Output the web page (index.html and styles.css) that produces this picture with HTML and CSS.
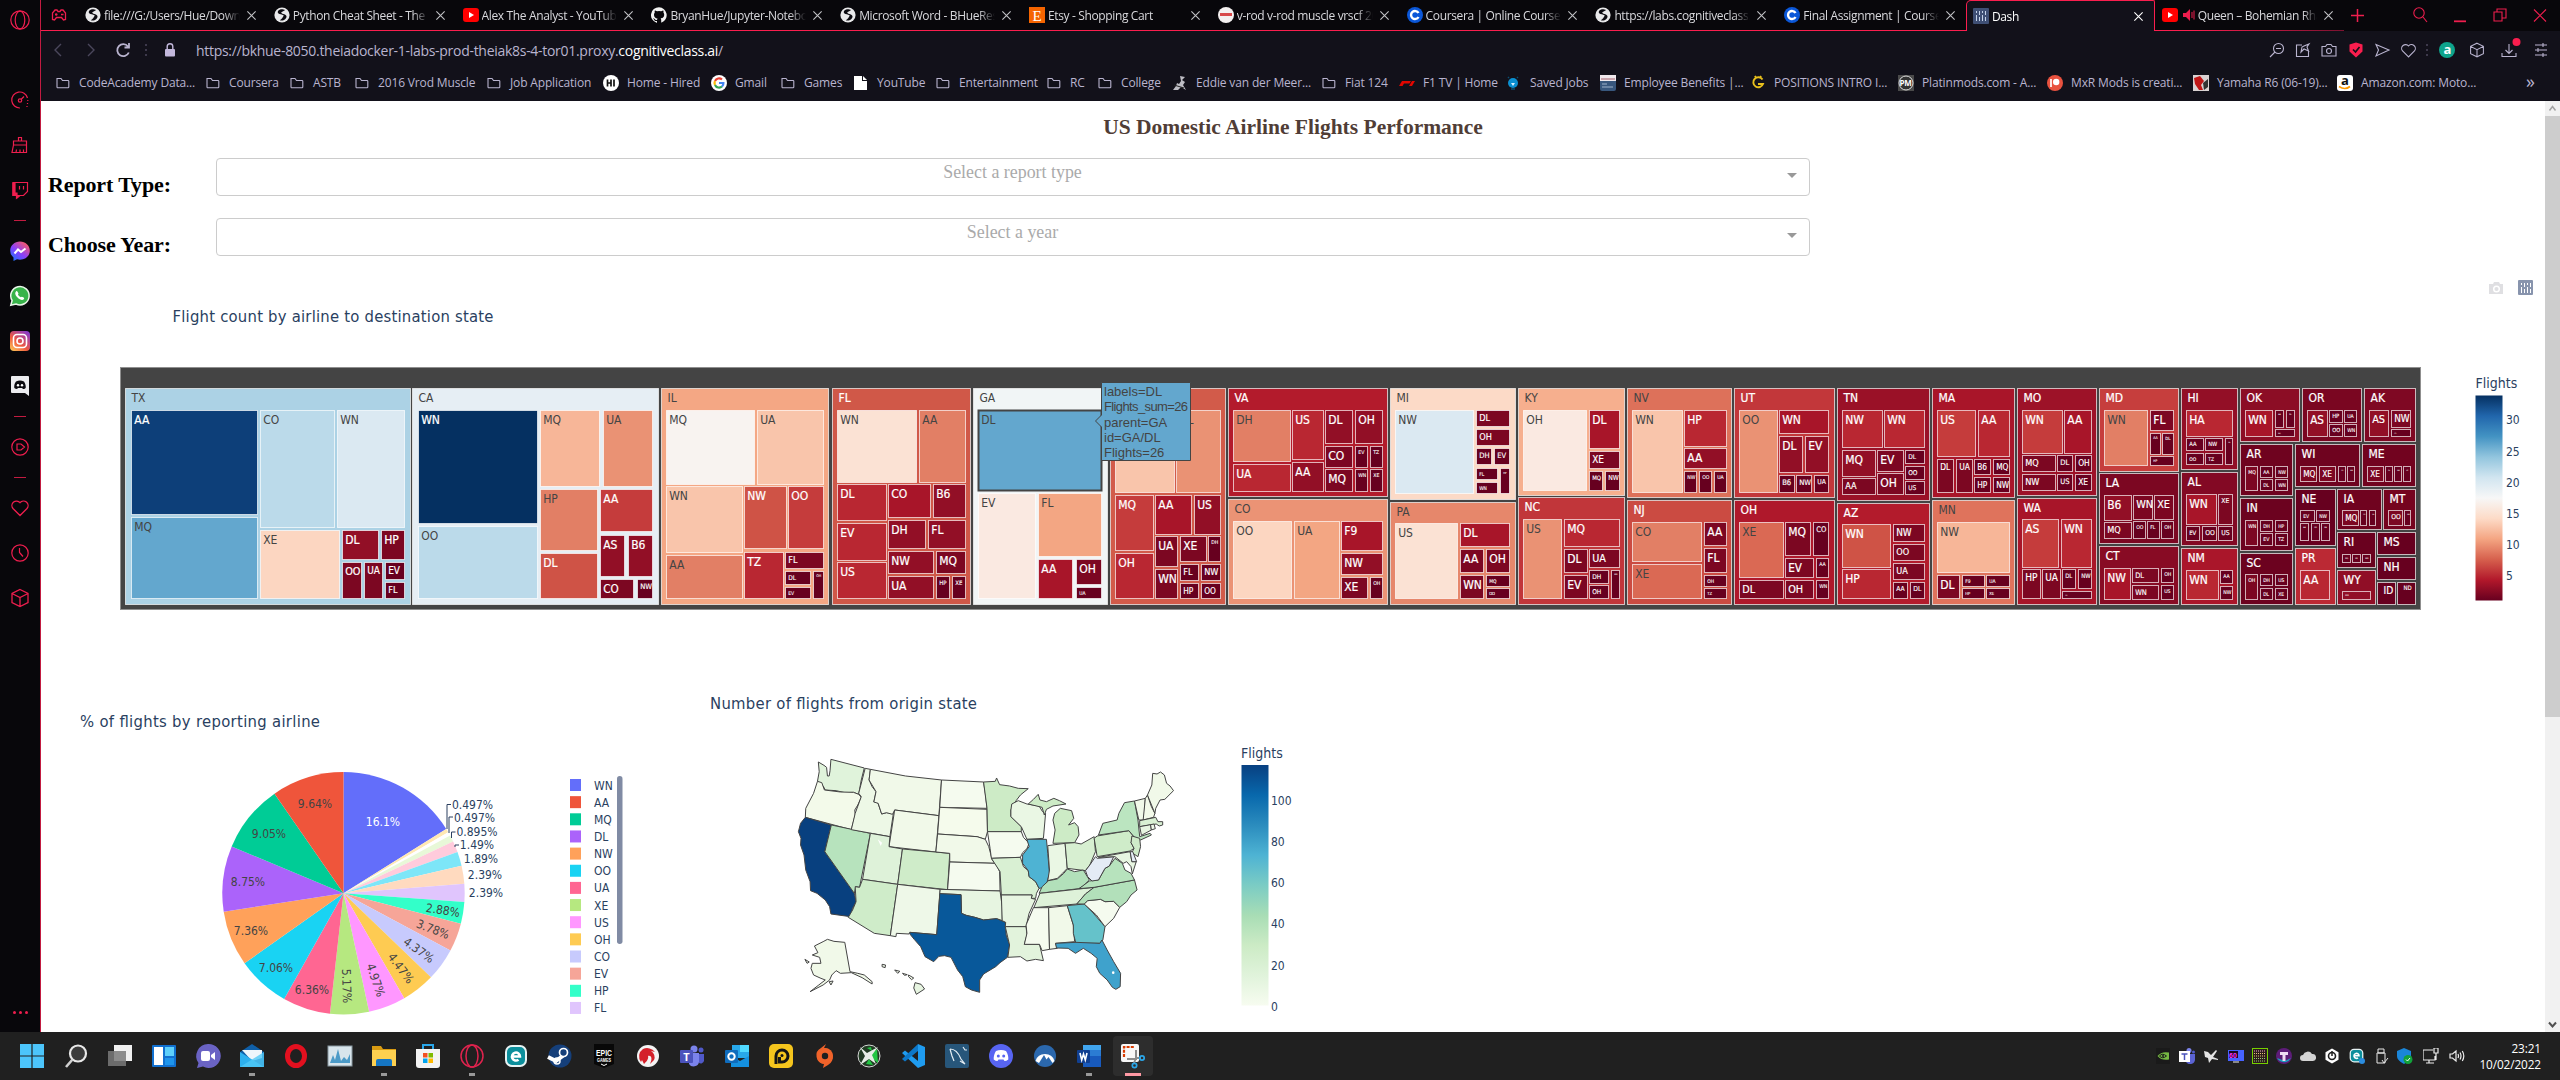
FILE: index.html
```html
<!DOCTYPE html>
<html lang="en">
<head>
<meta charset="utf-8">
<title>Dash</title>
<link rel="stylesheet" href="styles.css">
</head>
<body>
<svg class="defs" width="0" height="0">
  <symbol id="globe" viewBox="0 0 16 16"><circle cx="8" cy="8" r="7.6" fill="#e8e8ea"/><path d="M8.5 2.2C4.500 2 3 4.500 4.200 6.300 5.500 7.700 8 7 9.800 8.500 8.500 10.500 8 12.200 5.800 13.200 9 14.500 12.800 12 12.500 9.300 12 7 8.500 7.300 7.200 5.700 7.300 4.300 9.800 4.500 11.200 3z" fill="#0b0a10"/></symbol>
  <symbol id="yt" viewBox="0 0 16 16"><rect y="1" width="16" height="14" rx="3" fill="#f00"/><path d="M6 5v6l5-3z" fill="#fff"/></symbol>
  <symbol id="gh" viewBox="0 0 16 16"><path fill="#f2f2f2" d="M8 .2a8 8 0 0 0-2.500 15.600c.4 0 .5-.2.5-.4v-1.500c-2.200.5-2.700-1-2.700-1-.4-.9-.9-1.200-.9-1.200-.7-.5.1-.5.1-.5.800.1 1.200.8 1.200.8.7 1.300 1.900.9 2.400.7.1-.5.300-.9.5-1.100-1.800-.2-3.600-.9-3.600-4 0-.9.3-1.600.8-2.100-.1-.2-.4-1 .1-2.100 0 0 .7-.2 2.200.8a7.500 7.500 0 0 1 4 0c1.500-1 2.200-.8 2.200-.8.400 1.100.2 1.900.1 2.100.5.600.8 1.300.8 2.100 0 3.100-1.900 3.700-3.600 3.900.300.300.6.800.6 1.500v2.200c0 .2.100.5.5.4A8 8 0 0 0 8 .2z"/></symbol>
  <symbol id="etsy" viewBox="0 0 16 16"><rect width="16" height="16" fill="#f56400"/><text x="3.600" y="13.500" font-family="Liberation Serif" font-size="15" fill="#fff">E</text></symbol>
  <symbol id="vrod" viewBox="0 0 16 16"><circle cx="8" cy="8" r="8" fill="#f4f0f0"/><rect x="2" y="6" width="12" height="3" fill="#d8494a"/></symbol>
  <symbol id="coursera" viewBox="0 0 16 16"><circle cx="8" cy="8" r="8" fill="#0b57d8"/><path d="M11.500 6A4 4 0 1 0 11.500 10" fill="none" stroke="#fff" stroke-width="2.400"/></symbol>
  <symbol id="plotly" viewBox="0 0 16 16"><rect width="16" height="16" rx="1" fill="#3f4f75"/><path d="M3.500 7v6M6.500 9v4M9.500 7v6M12.500 9v4M3.500 3v2M6.500 3v4M9.500 3v2M12.500 3v4" stroke="#c5d3ea" stroke-width="1"/></symbol>
  <symbol id="x" viewBox="0 0 12 12"><path d="M1.500 1.500l9 9M10.500 1.500l-9 9" stroke="currentColor" stroke-width="1.200"/></symbol>
  <symbol id="folder" viewBox="0 0 14 14"><path d="M1 2.500h4l1.500 2H12a.8.8 0 0 1 .8.800V11a.8.8 0 0 1-.8.800H1.800A.8.8 0 0 1 1 11z" fill="none" stroke="#b9b4cf" stroke-width="1.100"/></symbol>
  <symbol id="cube" viewBox="0 0 20 20"><path d="M10 1.500l8 4v9l-8 4-8-4v-9zM2 5.500l8 4 8-4M10 9.500v9" fill="none" stroke="currentColor" stroke-width="1.300"/></symbol>
  <symbol id="heart" viewBox="0 0 20 20"><path d="M10 17.500L3 10.500A4.500 4.500 0 0 1 10 4.700a4.500 4.500 0 0 1 7 5.800z" fill="none" stroke="currentColor" stroke-width="1.300"/></symbol>
  <symbol id="teams" viewBox="0 0 24 24"><circle cx="14" cy="5" r="3.500" fill="#7b83eb"/><circle cx="21" cy="6" r="2.500" fill="#5059c9"/><path d="M9 9h10v9a5.500 5.500 0 0 1-10 2z" fill="#7b83eb"/><path d="M19 10h5v7a3.500 3.500 0 0 1-5 2z" fill="#5059c9"/><rect y="6" width="13" height="13" rx="1" fill="#4b53bc"/><text x="3.200" y="16.500" font-family="Open Sans" font-weight="700" font-size="11" fill="#fff">T</text></symbol>
  <symbol id="teams-light" viewBox="0 0 16 16"><circle cx="10" cy="2.500" r="2.500" fill="#7b83eb"/><circle cx="14.500" cy="4" r="1.500" fill="#5059c9"/><path d="M7 6h9v6a5 5 0 0 1-9 2z" fill="#5b63d3"/><rect y="3" width="11" height="11" fill="#fff"/><path d="M2.500 6h6M5.500 6v6" stroke="#4b53bc" stroke-width="1.500"/></symbol>
  <symbol id="eset" viewBox="0 0 24 24"><rect x="1" y="1" width="22" height="22" rx="7" fill="#e8f3f4"/><rect x="3" y="3" width="18" height="18" rx="5" fill="#0c8f9c"/><path d="M8 12.500h8a4 4 0 1 0-1.500 3.200" fill="none" stroke="#fff" stroke-width="2.500"/></symbol>
</svg>

<div class="screen">
  <aside class="sidebar">
    <div class="side-top"><svg width="20" height="20" viewBox="0 0 20 20"><circle cx="10" cy="10" r="9.200"/><ellipse cx="10" cy="10" rx="4.800" ry="8.800"/></svg></div>
    <div class="side-cell"><svg width="18" height="18" viewBox="0 0 18 18"><path d="M9 17A8 8 0 1 1 16.500 7M16.800 9v1M16.500 12v1M16 15v1"/><circle cx="9" cy="9.500" r="1.700"/><path d="M10 8.500l3-3"/></svg></div>
    <div class="side-cell"><svg width="18" height="18" viewBox="0 0 18 18"><path d="M7.500 5V1.500h3V5M2.500 5h13v4h-13zM2.500 9L1 16.500h14.500V9M5 16.500l.5-3M9 16.500v-3M12.500 16.500v-3"/></svg></div>
    <div class="side-cell"><svg width="18" height="18" viewBox="0 0 18 18"><path d="M2 1.500h14.500v9l-4 4H9l-3 2.500v-2.500H2z"/><path d="M2 2v12.500h3.500V17L8 14.500H6V12H4V2z" fill="#ee1e4e"/><path d="M8.500 5v3.500M12.500 5v3.500"/></svg></div>
    <div class="side-line"></div>
    <div class="side-cell"><svg width="20" height="20" viewBox="0 0 20 20"><defs><linearGradient id="msg" x1="0" y1="1" x2=".8" y2="0"><stop offset="0" stop-color="#0a7cff"/><stop offset=".5" stop-color="#8a3ffc"/><stop offset="1" stop-color="#ff5a5f"/></linearGradient></defs><path d="M10 .5c5.500 0 9.800 4 9.800 9.200s-4.300 9-9.800 9l-3-.4L3.500 20v-3.500A9 9 0 0 1 .2 9.700C.2 4.500 4.500.5 10 .5z" fill="url(#msg)" stroke="none"/><path d="M4.500 12.500L8 8.500l3 2.500 4.500-3.500" stroke="#fff" stroke-width="2"/></svg></div>
    <div class="side-cell"><svg width="20" height="20" viewBox="0 0 20 20"><path d="M.8 19.300l1.300-4.800A9.200 9.200 0 1 1 6 18z" fill="#37b34a" stroke="#e9f6e9" stroke-width="1.500"/><path d="M6 5.500c1-1 1.500 0 2.500 2-.8 1.200-.5 1.200.5 2.500 1.300 1.200 1.800 1.500 2.800.8 2 .8 3 1.300 2 2.500-1.500 1.500-4 .5-6-1.500s-3.500-4.500-1.800-6.300z" fill="#fff" stroke="none"/></svg></div>
    <div class="side-cell"><svg width="20" height="20" viewBox="0 0 20 20"><defs><linearGradient id="ig" x1="0" y1="1" x2=".8" y2="0"><stop offset="0" stop-color="#ffd35a"/><stop offset=".45" stop-color="#f0593f"/><stop offset="1" stop-color="#8a3ac8"/></linearGradient></defs><rect width="20" height="20" rx="4" fill="url(#ig)" stroke="none"/><rect x="3.500" y="3.500" width="13" height="13" rx="3.500" stroke="#fff" stroke-width="1.600"/><circle cx="10" cy="10" r="3" stroke="#fff" stroke-width="1.600"/></svg></div>
    <div class="side-cell"><svg width="18" height="20" viewBox="0 0 18 20"><path d="M1 0h16a1 1 0 0 1 1 1v19l-4-3H1a1 1 0 0 1-1-1V1a1 1 0 0 1 1-1z" fill="#ececf0" stroke="none"/><path d="M5 5.500c3-1.500 5-1.500 8 0 1.500 2.500 2 4.500 1.700 6.500-1 1-2 1-2.700 1l-1-1H7l-1 1c-1 0-2-.3-2.700-1C3 9.500 3.500 7.500 5 5.500z" fill="#0b0a10" stroke="none"/><circle cx="7" cy="9.300" r="1.200" fill="#fff" stroke="none"/><circle cx="11" cy="9.300" r="1.200" fill="#fff" stroke="none"/></svg></div>
    <div class="side-line"></div>
    <div class="side-cell"><svg width="18" height="18" viewBox="0 0 18 18"><circle cx="9" cy="9" r="8.200"/><path d="M6 6v6l4 0 3.500-3L10 6z"/></svg></div>
    <div class="side-line"></div>
    <div class="side-cell"><svg width="20" height="20"><use href="#heart"/></svg></div>
    <div class="side-cell"><svg width="18" height="18" viewBox="0 0 18 18"><circle cx="9" cy="9" r="8.200"/><path d="M8.500 4v4.500l3.500 4"/></svg></div>
    <div class="side-cell"><svg width="20" height="20"><use href="#cube"/></svg></div>
    <div class="side-more"><i></i><i></i><i></i></div>
  </aside>

  <div class="browser">
    <div class="tabs">
      <div class="gx"><svg width="16" height="14" viewBox="0 0 16 14"><path d="M4 2h2l1 1.500h2L10 2h2l2.500 3v6.500l-2 .5-2-2.500h-5l-2 2.500-2-.5V5zM4 6.500h2.500M5.200 5.300v2.500M10 6.500h2.500" fill="none" stroke="#ee1e4e" stroke-width="1.300"/></svg></div>
      <div class="tab"><svg class="fav"><use href="#globe"/></svg><span>file:///G:/Users/Hue/Downloads</span><svg class="close"><use href="#x"/></svg></div>
      <div class="tab"><svg class="fav"><use href="#globe"/></svg><span>Python Cheat Sheet - The Best</span><svg class="close"><use href="#x"/></svg></div>
      <div class="tab"><svg class="fav"><use href="#yt"/></svg><span>Alex The Analyst - YouTube</span><svg class="close"><use href="#x"/></svg></div>
      <div class="tab"><svg class="fav"><use href="#gh"/></svg><span>BryanHue/Jupyter-Notebooks</span><svg class="close"><use href="#x"/></svg></div>
      <div class="tab"><svg class="fav"><use href="#globe"/></svg><span>Microsoft Word - BHueResume</span><svg class="close"><use href="#x"/></svg></div>
      <div class="tab"><svg class="fav"><use href="#etsy"/></svg><span>Etsy - Shopping Cart</span><svg class="close"><use href="#x"/></svg></div>
      <div class="tab"><svg class="fav"><use href="#vrod"/></svg><span>v-rod v-rod muscle vrscf 2016</span><svg class="close"><use href="#x"/></svg></div>
      <div class="tab"><svg class="fav"><use href="#coursera"/></svg><span>Coursera | Online Courses &amp;</span><svg class="close"><use href="#x"/></svg></div>
      <div class="tab"><svg class="fav"><use href="#globe"/></svg><span>https://labs.cognitiveclass.ai</span><svg class="close"><use href="#x"/></svg></div>
      <div class="tab"><svg class="fav"><use href="#coursera"/></svg><span>Final Assignment | Coursera</span><svg class="close"><use href="#x"/></svg></div>
      <div class="tab active"><svg class="fav"><use href="#plotly"/></svg><span>Dash</span><svg class="close"><use href="#x"/></svg></div>
      <div class="tab last"><svg class="fav"><use href="#yt"/></svg><svg class="sound" viewBox="0 0 12 14"><path d="M0 5h3l4-4v12L3 9H0z" fill="#ee1e4e"/><path d="M9 4v6M11 2.500v9" stroke="#ee1e4e"/></svg><span>Queen – Bohemian Rhapsody</span><svg class="close"><use href="#x"/></svg></div>
      <svg class="plus" viewBox="0 0 12 12"><path d="M6 0v12M0 6h12" stroke="#ee1e4e" stroke-width="1.400"/></svg>
      <div class="winbtns">
        <svg viewBox="0 0 16 16"><circle cx="7" cy="6" r="5.200"/><path d="M11 10l4 5"/></svg>
        <svg viewBox="0 0 16 16"><path d="M2 14.300h12" stroke-width="1.800"/></svg>
        <svg viewBox="0 0 16 16"><path d="M2 5h8v9H2zM5 5V2h9v9h-4"/></svg>
        <svg viewBox="0 0 16 16"><path d="M2 2.500l12 12M14 2.500l-12 12"/></svg>
      </div>
    </div>
    <div class="toolbar">
      <svg class="nav" width="94" height="18" viewBox="0 0 94 18"><path d="M10 3L4 9l6 6M37 3l6 6-6 6" fill="none" stroke="#4b475c" stroke-width="1.400"/><path d="M77 5.500a6 6 0 1 0 .8 6M78 2v4.500h-4.500" fill="none" stroke="#b9b4cf" stroke-width="1.800"/></svg>
      <div class="vdots"></div>
      <svg class="lock" width="10" height="14" viewBox="0 0 10 14"><rect y="6" width="10" height="7.500" rx="1" fill="#c3b8dc"/><path d="M2.200 6V3.500a2.800 2.800 0 0 1 5.600 0V6" fill="none" stroke="#c3b8dc" stroke-width="1.400"/></svg>
      <div class="url">https://bkhue-8050.theiadocker-1-labs-prod-theiak8s-4-tor01.proxy.<b>cognitiveclass.ai</b>/</div>
      <div class="tools">
        <svg viewBox="0 0 16 16"><circle cx="9.500" cy="6.500" r="5"/><path d="M6 10l-5 5M7 6.500h5"/></svg>
        <svg viewBox="0 0 16 16"><path d="M7 3H1.500v11.500h12V9M6 10l3-3 4.500 2L12 5l2-3-5 2-2 1z"/></svg>
        <svg viewBox="0 0 16 16"><path d="M1 4.500h3.500L6 2.500h4l1.500 2H15V14H1z"/><circle cx="8" cy="9" r="2.500"/></svg>
        <svg viewBox="0 0 16 16"><path d="M8 .5l6.500 2v7L8 15.500 1.500 9.500v-7z" fill="#fa1e4e" stroke="none"/><path d="M5 7.500l2.500 2.500L11.500 5" stroke="#12111a" stroke-width="1.700"/></svg>
        <svg viewBox="0 0 16 16"><path d="M2 2.500l13 5.500-13 6 2.500-6z"/></svg>
        <svg viewBox="0 0 16 16"><use href="#heart" width="17" height="17"/></svg>
        <div class="vdots"></div>
        <svg viewBox="0 0 16 16"><circle cx="8" cy="8" r="8" fill="#0ea48c" stroke="none"/><text class="glyph-a" x="4.500" y="12">a</text></svg>
        <svg viewBox="0 0 16 16"><use href="#cube" width="16" height="16"/></svg>
        <svg class="dl" viewBox="0 0 16 16"><path d="M8 2v9M4.500 8L8 11.500 11.500 8M1 11v3.500h14V11"/><circle cx="15.500" cy="0" r="4" fill="#fa1e4e" stroke="none"/></svg>
        <svg viewBox="0 0 16 16"><path d="M2 3h12M2 8h12M2 13h12M10 1v4M5 6v4M10 11v4" /></svg>
      </div>
    </div>
    <div class="bookmarks">
      <div><svg class="fd"><use href="#folder"/></svg>CodeAcademy Data...</div>
      <div><svg class="fd"><use href="#folder"/></svg>Coursera</div>
      <div><svg class="fd"><use href="#folder"/></svg>ASTB</div>
      <div><svg class="fd"><use href="#folder"/></svg>2016 Vrod Muscle</div>
      <div><svg class="fd"><use href="#folder"/></svg>Job Application</div>
      <div><svg class="fi" viewBox="0 0 16 16"><circle cx="8" cy="8" r="8" fill="#fff"/><path d="M4.500 4.500v7M4.500 8H8M8 4.500v7M11 4.500v7" stroke="#111" stroke-width="1.700"/></svg>Home - Hired</div>
      <div><svg class="fi" viewBox="0 0 16 16"><circle cx="8" cy="8" r="8" fill="#fff"/><g fill="none" stroke-width="2.200"><path d="M11 4.500A4.500 4.500 0 0 0 4 6" stroke="#ea4335"/><path d="M4 6a4.500 4.500 0 0 0 0 4" stroke="#fbbc05"/><path d="M4 10a4.500 4.500 0 0 0 7 1.500" stroke="#34a853"/><path d="M11 11.500A4.500 4.500 0 0 0 12.400 8H8" stroke="#4285f4"/></g></svg>Gmail</div>
      <div><svg class="fd"><use href="#folder"/></svg>Games</div>
      <div><svg class="fi" viewBox="0 0 16 16"><path d="M1 1h8v5h5v9H1zM10 1l4 4h-4z" fill="#fff"/></svg>YouTube</div>
      <div><svg class="fd"><use href="#folder"/></svg>Entertainment</div>
      <div><svg class="fd"><use href="#folder"/></svg>RC</div>
      <div><svg class="fd"><use href="#folder"/></svg>College</div>
      <div><svg class="fi" viewBox="0 0 16 16"><path d="M8 1l5 1-3 3 3 2-2 3 3 5-5-3-3 3-5 0 3-4 1-3 2 1 2-3z" fill="#bdbdc4"/><path d="M2 10l10 3" stroke="#222"/></svg>Eddie van der Meer...</div>
      <div><svg class="fd"><use href="#folder"/></svg>Fiat 124</div>
      <div><svg class="fi" viewBox="0 0 16 16"><path d="M0 11l3-5h9l-1.500 2.500H5L3.500 11zM13 6h3l-3 5h-3z" fill="#e10600"/></svg>F1 TV | Home</div>
      <div><svg class="fi" viewBox="0 0 16 16"><circle cx="7" cy="8" r="5" fill="#0a8fd0"/><path d="M5 14h4M2 2l1 1M12 2l-1 1" stroke="#0a4d70" stroke-width="1.500"/><path d="M5 8h4l-2 3z" fill="#d7f0ff"/></svg>Saved Jobs</div>
      <div><svg class="fi" viewBox="0 0 16 16"><rect width="16" height="16" rx="2" fill="#38577d"/><path d="M0 0h16v6H0z" fill="#f0e9ed"/><path d="M1 4h14" stroke="#a5606c"/><path d="M2 9h5M2 12h11" stroke="#9fb4cc"/></svg>Employee Benefits |...</div>
      <div><svg class="fi" viewBox="0 0 16 16"><path d="M12.500 4.500A5 5 0 1 0 13 9H8M5 1l1 2M11 1l-1 2" fill="none" stroke="#e8c01c" stroke-width="1.900"/></svg>POSITIONS INTRO I...</div>
      <div><svg class="fi" viewBox="0 0 16 16"><rect width="16" height="16" fill="#4a4a4a"/><circle cx="8" cy="8" r="7" fill="#333" stroke="#ddd"/><text class="pm" x="1.500" y="11">PM</text></svg>Platinmods.com - A...</div>
      <div><svg class="fi" viewBox="0 0 16 16"><circle cx="8" cy="8" r="8" fill="#e8523f"/><circle cx="9.200" cy="7" r="3.200" fill="#fff"/><path d="M4 4v8" stroke="#fff" stroke-width="1.700"/></svg>MxR Mods is creati...</div>
      <div><svg class="fi" viewBox="0 0 16 16"><rect width="16" height="16" fill="#d9d2d2"/><path d="M1 3l6-2 4 5-3 4 2 5H6L2 9z" fill="#c01616"/><path d="M10 8l5-4v8l-4 3z" fill="#333"/></svg>Yamaha R6 (06-19)...</div>
      <div><svg class="fi" viewBox="0 0 16 16"><rect width="16" height="16" rx="3" fill="#fff"/><text class="az" x="4" y="10">a</text><path d="M2 11.500q6 4 11 0" fill="none" stroke="#f90" stroke-width="1.700"/></svg>Amazon.com: Moto...</div>
      <div class="more">»</div>
    </div>

    <div class="viewport">
      <main class="page">
        <h1>US Domestic Airline Flights Performance</h1>
        <div class="field"><h2>Report Type:</h2><div class="select"><span>Select a report type</span><i></i></div></div>
        <div class="field"><h2>Choose Year:</h2><div class="select"><span>Select a year</span><i></i></div></div>
        <svg class="chart" id="tree" width="2504" height="410" viewBox="41 270 2504 410">
          <defs><linearGradient id="rdbu" x1="0" y1="1" x2="0" y2="0"><stop offset="0" stop-color="#67001f"/><stop offset=".1" stop-color="#b2182b"/><stop offset=".2" stop-color="#d6604d"/><stop offset=".3" stop-color="#f4a582"/><stop offset=".4" stop-color="#fddbc7"/><stop offset=".5" stop-color="#f7f7f7"/><stop offset=".6" stop-color="#d1e5f0"/><stop offset=".7" stop-color="#92c5de"/><stop offset=".8" stop-color="#4393c3"/><stop offset=".9" stop-color="#2166ac"/><stop offset="1" stop-color="#053061"/></linearGradient></defs>
          <text class="title" x="172.500" y="322" textLength="321">Flight count by airline to destination state</text>
          <g opacity=".9"><path d="M2489 284h4l1-2h5l1 2h3v10h-14z" fill="#dcdcdf"/><circle cx="2496.500" cy="289" r="2.800" fill="none" stroke="#fff" stroke-width="1.500"/></g>
          <g transform="translate(2518 280)"><rect width="15" height="15" rx="1" fill="#8894ad"/><path d="M3.500 7v6M6.500 9v4M9.500 7v6M12.500 9v4M3.500 3v2M6.500 3v4M9.500 3v2M12.500 3v4" stroke="#fff" stroke-width="1"/></g>
          <text class="cbt" x="2475.500" y="388">Flights</text>
          <rect x="2475.500" y="395.500" width="27" height="205" fill="url(#rdbu)"/>
          <g class="tick"><text x="2506" y="424">30</text><text x="2506" y="456">25</text><text x="2506" y="487">20</text><text x="2506" y="518">15</text><text x="2506" y="549">10</text><text x="2506" y="580">5</text></g>
          <rect x="120.500" y="367.500" width="2300" height="242" fill="#444" stroke="#8f8f8f"/>
          <g id="cells"></g>
          <g class="hover"><path d="M1095.500 421l6-6V382.500h89v78h-89V427z"/>
            <text x="1104" y="395.500">labels=DL</text><text x="1104" y="410.500" textLength="84">Flights_sum=26</text><text x="1104" y="426.500">parent=GA</text><text x="1104" y="441.500">id=GA/DL</text><text x="1104" y="456.500">Flights=26</text></g>
        </svg>
        <div class="row">
          <svg class="chart" id="pie" width="639" height="352" viewBox="41 680 639 352">
            <text class="title" x="80" y="727" textLength="240">% of flights by reporting airline</text>
            <g id="slices"></g><g id="legend"></g>
            <rect x="617" y="776" width="5.500" height="168" rx="2.700" fill="#808ba4"/>
            <path d="M447 829v-24.500h4M449 833v-16h4M451.500 838v-6h4M455 847v-2h4" fill="none" stroke="#2a3f5f"/>
          </svg>
          <svg class="chart" id="map" width="700" height="352" viewBox="680 680 700 352">
            <defs><linearGradient id="gnbu" x1="0" y1="1" x2="0" y2="0"><stop offset="0" stop-color="#f7fcf0"/><stop offset=".125" stop-color="#e0f3db"/><stop offset=".25" stop-color="#ccebc5"/><stop offset=".375" stop-color="#a8ddb5"/><stop offset=".5" stop-color="#7bccc4"/><stop offset=".625" stop-color="#4eb3d3"/><stop offset=".75" stop-color="#2b8cbe"/><stop offset=".875" stop-color="#0868ac"/><stop offset="1" stop-color="#084081"/></linearGradient></defs>
            <text class="title" x="710" y="709" textLength="267">Number of flights from origin state</text>
            <g id="states" transform="translate(680 680) scale(.43367 .33333)"></g>
            <text class="cbt" x="1241" y="757.500">Flights</text>
            <rect x="1241.500" y="765" width="27" height="240.500" fill="url(#gnbu)"/>
            <g class="tick"><text x="1271" y="804.500">100</text><text x="1271" y="845.500">80</text><text x="1271" y="886.500">60</text><text x="1271" y="927.500">40</text><text x="1271" y="969.500">20</text><text x="1271" y="1010.500">0</text></g>
          </svg>
        </div>
      </main>
      <div class="scroll"><div class="thumb"></div><svg class="up" viewBox="0 0 15 15"><path d="M4.500 9.500l3-4 3 4" fill="none" stroke="#a3a3a3" stroke-width="1.500"/></svg><svg class="down" viewBox="0 0 15 15"><path d="M4 5.500l3.500 4 3.500-4" fill="none" stroke="#505050" stroke-width="2"/></svg></div>
    </div>
  </div>
</div>

<footer class="taskbar">
  <div class="apps">
    <div><svg viewBox="0 0 24 24"><path d="M0 0h11.400v11.400H0zM12.600 0H24v11.400H12.600zM0 12.600h11.400V24H0zM12.600 12.600H24V24H12.600z" fill="#4cc5fb"/></svg></div>
    <div><svg viewBox="0 0 24 24"><circle cx="14" cy="9.500" r="8" fill="#3b3b3b" stroke="#e8e8e8" stroke-width="2.200"/><path d="M8.500 15.500L2 23" stroke="#d0d0d0" stroke-width="2.600"/></svg></div>
    <div><svg viewBox="0 0 24 24"><path d="M6 1h18v16H6z" fill="#f0f0f0"/><path d="M0 7h18v15H0z" fill="#7a7a7a" opacity=".85"/></svg></div>
    <div><svg viewBox="0 0 24 24"><rect y="1" width="24" height="22" rx="1" fill="#1170d0"/><path d="M2 3h9v18H2z" fill="#fff"/><path d="M13 3h9v9h-9z" fill="#5ed0fb"/><path d="M13 14h9v7h-9z" fill="#1e95ec"/></svg></div>
    <div><svg viewBox="0 0 24 24"><path d="M12 0a12 12 0 1 1-5 22.500L1 24l1.500-5A12 12 0 0 1 12 0z" fill="#6a63c4"/><rect x="5" y="7" width="9" height="10" rx="2" fill="#fff"/><path d="M15 11l4-3v8l-4-3z" fill="#fff"/></svg></div>
    <div class="run"><svg viewBox="0 0 24 24"><path d="M0 8l12-8 12 8v15H0z" fill="#0f5fa8"/><path d="M2 6h20v8l-10 3z" fill="#eef6fb"/><path d="M0 8l24 15H0z" fill="#2db0ee"/><path d="M24 8L0 23h24z" fill="#50c9f6" opacity=".8"/></svg></div>
    <div><svg viewBox="0 0 24 24"><ellipse cx="12" cy="12" rx="8.500" ry="9.500" fill="none" stroke="#e3101f" stroke-width="5"/></svg></div>
    <div><svg viewBox="0 0 24 24"><rect y="2" width="24" height="20" fill="#d8e5ec" stroke="#88979f"/><path d="M2 19l3-8 2 5 3-11 3 12 3-4 3 3 3-6v9H2z" fill="#4b9ac7"/></svg></div>
    <div class="run"><svg viewBox="0 0 24 24"><path d="M0 2h9l2 3h13v17H0z" fill="#d99b12"/><path d="M0 6h24v16H0z" fill="#fdd050"/><path d="M4 22v-5a2 2 0 0 1 2-2h12a2 2 0 0 1 2 2v5z" fill="#1576c4"/></svg></div>
    <div><svg viewBox="0 0 24 24"><path d="M7 6V1h10v5" fill="none" stroke="#2aa7ea" stroke-width="2"/><path d="M0 5h24v16a3 3 0 0 1-3 3H3a3 3 0 0 1-3-3z" fill="#f3f3f3"/><path d="M7 9h4.500v4.500H7z" fill="#f25022"/><path d="M12.500 9H17v4.500h-4.500z" fill="#7fba00"/><path d="M7 14.500h4.500V19H7z" fill="#00a4ef"/><path d="M12.500 14.500H17V19h-4.500z" fill="#ffb900"/></svg></div>
    <div class="run"><svg viewBox="0 0 24 24"><g fill="none" stroke="#e0234e" stroke-width="1.500"><circle cx="12" cy="12" r="11"/><ellipse cx="12" cy="12" rx="6" ry="11"/></g></svg></div>
    <div><svg viewBox="0 0 24 24"><use href="#eset" width="24" height="24"/></svg></div>
    <div><svg viewBox="0 0 24 24"><circle cx="12" cy="12" r="11.500" fill="#153f7a"/><path d="M0 13l8 4 8-6" stroke="#fff" stroke-width="4" fill="none"/><circle cx="15.500" cy="8.500" r="4" fill="#153f7a" stroke="#fff" stroke-width="1.700"/><circle cx="9" cy="17" r="3" fill="none" stroke="#fff" stroke-width="1.500"/></svg></div>
    <div><svg viewBox="0 0 24 24"><path d="M2 0h20v20l-10 4-10-4z" fill="#080808"/><text class="epic" x="4" y="12" textLength="16" lengthAdjust="spacingAndGlyphs">EPIC</text><text class="epic2" x="5" y="18" textLength="14" lengthAdjust="spacingAndGlyphs">GAMES</text><path d="M9 20l3 1.500 3-1.500" stroke="#fff" fill="none"/></svg></div>
    <div><svg viewBox="0 0 24 24"><circle cx="12" cy="12" r="11" fill="#f3f3f3"/><path d="M5 18a9 9 0 0 1 2-13 10 10 0 0 1 12 3l-4-1a7 7 0 0 1 3 9l-4 4c3-6 1-9-2-8 1 3-2 6-4 8l-2-4z" fill="#d4202a"/></svg></div>
    <div><svg viewBox="0 0 24 24"><use href="#teams" width="24" height="24"/></svg></div>
    <div><svg viewBox="0 0 24 24"><path d="M7 1h17v13H7z" fill="#28a8ea"/><path d="M15 1h9v7h-9z" fill="#50d9ff"/><path d="M6 12l9 5 9-5v11H6z" fill="#1490df"/><rect y="6" width="13" height="13" rx="1" fill="#0f6cbd"/><circle cx="6.500" cy="12.500" r="3.200" fill="none" stroke="#fff" stroke-width="2"/></svg></div>
    <div><svg viewBox="0 0 24 24"><rect width="24" height="24" rx="5" fill="#f5c51d"/><path d="M7 20v-8a6 6 0 1 1 6 6h-2.500v-5" fill="none" stroke="#151515" stroke-width="3"/><circle cx="13" cy="11.500" r="1.500" fill="#151515"/></svg></div>
    <div><svg viewBox="0 0 24 24"><path d="M13 0l-2 4a9 9 0 0 1 4 17l-5 3 1-4A8.500 8.500 0 0 1 8 4z" fill="#f1632a"/><circle cx="12" cy="12" r="8" fill="#f1632a"/><circle cx="12" cy="12" r="3.200" fill="#202020"/></svg></div>
    <div><svg viewBox="0 0 24 24"><circle cx="12" cy="12" r="11" fill="#223c24" stroke="#d5d5d5" stroke-width="1"/><path d="M12 12l8-7 1 14z" fill="#22c643"/><path d="M10 4l4-1 1 4zM9 20l7 1-4-6z" fill="#22c643"/><path d="M3 3l7 6 11-6-6 8 4 9-7-5-9 6 5-9z" fill="#e6eee6"/></svg></div>
    <div><svg viewBox="0 0 24 24"><path d="M17 0l7 3v18l-7 3L1 9l3-2.500L17 17z" fill="#1f9cf0"/><path d="M17 0v7L4 17.500 1 15z" fill="#0d78c9"/></svg></div>
    <div><svg viewBox="0 0 24 24"><rect width="24" height="24" rx="2" fill="#27567a"/><path d="M5 5c5 0 9 5 11 10l4 5-5-3M5 5l2 7 2 5M18 3l2 3 2 0" stroke="#e5eef4" stroke-width="1.200" fill="none"/></svg></div>
    <div><svg viewBox="0 0 24 24"><circle cx="12" cy="12" r="12" fill="#5865f2"/><path d="M7 7c3-1.500 7-1.500 10 0 2 3 2.500 6 2.300 8.500-1.300 1-2.500 1.500-3.800 1.500l-1-1.500h-5L8.500 17c-1.300 0-2.500-.5-3.800-1.500C4.500 12.500 5.500 9 7 7z" fill="#fff"/><circle cx="9.300" cy="12" r="1.500" fill="#5865f2"/><circle cx="14.700" cy="12" r="1.500" fill="#5865f2"/></svg></div>
    <div><svg viewBox="0 0 24 24"><circle cx="12" cy="12" r="11" fill="#2b68ad"/><path d="M2.500 17A10 10 0 0 1 21.500 17l-2 2-4-6-2 2.500-2.500-4.500L6 19z" fill="#fff"/><path d="M6 6a9 9 0 0 1 12 0l2 5a9.500 9.500 0 0 0-16 0z" fill="#2b68ad"/></svg></div>
    <div class="run"><svg viewBox="0 0 24 24"><path d="M6 1h18v11H6z" fill="#41a5ee"/><path d="M6 6h18v6H6z" fill="#2b7cd3"/><path d="M6 12h18v11H6z" fill="#185abd"/><rect y="6" width="13" height="13" rx="1" fill="#103f91"/><path d="M3 9l1.700 7L6.500 10l1.800 6L10 9" fill="none" stroke="#fff" stroke-width="1.600"/></svg></div>
    <div class="cur"><svg viewBox="0 0 24 24"><rect width="18" height="18" rx="2" fill="#f7f7f7"/><path d="M3 13V3h11" fill="none" stroke="#d83b01" stroke-width="2.200" stroke-dasharray="3 1.200"/><path d="M15 6v9H6M15 14l-2 5M16 14l4 0" stroke="#8c8c8c" stroke-width="2" fill="none"/><circle cx="21" cy="14" r="2.200" fill="none" stroke="#2aa7ea" stroke-width="1.700"/><circle cx="13.500" cy="21.500" r="2.200" fill="none" stroke="#2aa7ea" stroke-width="1.700"/></svg></div>
  </div>
  <div class="tray">
    <svg viewBox="0 0 16 16"><rect width="14" height="16" x="1" fill="#1a1a1a"/><path d="M2.500 8q4-5 11.500-3.500v7Q7 13 2.500 8z" fill="#76b943"/><path d="M4.500 8q3-3.500 7 0-4 3.500-7 0z" fill="none" stroke="#1a1a1a"/><circle cx="8" cy="8" r="1" fill="#1a1a1a"/></svg>
    <svg viewBox="0 0 16 16"><use href="#teams-light" width="16" height="16"/></svg>
    <svg viewBox="0 0 16 16"><path d="M1 3l4 1 3 3 5-5 1 1-4 6 5 2v1l-6-1-3 4-1-5-3-1z" fill="#e3e3e3"/></svg>
    <svg viewBox="0 0 16 16"><rect y="2" width="16" height="11" fill="#4663ff"/><rect x="1" y="3" width="9" height="7" fill="#18081c"/><text class="t60" x="1" y="9.500">60</text><path d="M5 14h6" stroke="#888" stroke-width="2"/></svg>
    <svg viewBox="0 0 16 16"><rect x=".5" y=".5" width="15" height="15" fill="#2c1b1b" stroke="#76d000"/><path d="M2 3h12" stroke="#f6b1d4" stroke-dasharray="1 1"/><path d="M2 5.500h12M2 8h12" stroke="#eac97b" stroke-dasharray="1 1"/><path d="M2 10.500h12M2 13h12" stroke="#9acb7b" stroke-dasharray="1 1"/></svg>
    <svg viewBox="0 0 16 16"><circle cx="8" cy="8" r="8" fill="#5d1c78"/><path d="M1 10a8 8 0 0 0 14 0l-6 3z" fill="#1aa3c0"/><path d="M4 4h8v3H9.500v6h-3V7H4z" fill="#f0dcf4"/></svg>
    <svg viewBox="0 0 16 16"><path d="M3 13a3 3 0 0 1 0-6 5 5 0 0 1 9-1 3.500 3.500 0 0 1 1 7z" fill="#d4d4d4"/></svg>
    <svg viewBox="0 0 16 16"><path d="M8 .5l6.500 3.700v7.600L8 15.500l-6.500-3.700V4.200z" fill="#fff"/><circle cx="8" cy="8" r="3.500" fill="none" stroke="#202020" stroke-width="1.600"/><path d="M8 3v5" stroke="#202020" stroke-width="1.500"/></svg>
    <svg viewBox="0 0 16 16"><use href="#eset" width="15" height="15"/><circle cx="13" cy="13" r="3" fill="#2b8de0"/></svg>
    <svg viewBox="0 0 16 16"><path d="M5 1h6v4H5zM4 5h8v10H4zM9 12l2 3 4-5" fill="none" stroke="#e8e8e8"/></svg>
    <svg viewBox="0 0 16 16"><path d="M7 0l7 3v5c0 4-4 6-7 8-3-2-7-4-7-8V3z" fill="#1a86d9"/><circle cx="11" cy="11.500" r="4.500" fill="#12a23a"/><path d="M9 11.500l1.500 1.500 2.500-3" stroke="#fff" fill="none"/></svg>
    <svg viewBox="0 0 16 16"><path d="M10 2H0v10h12V8M3 15h8M6 12v3M11 0h4v5h-4zM13 5v7" fill="none" stroke="#eee" stroke-width="1.200"/></svg>
    <svg viewBox="0 0 16 16"><path d="M1 6h2.500L7 3v10L3.500 10H1zM9 6q1 2 0 4M11 4.500q2 3.500 0 7M13.300 3q3 5 0 10" fill="none" stroke="#eee" stroke-width="1.200"/></svg>
  </div>
  <div class="clock">23:21<br>10/02/2022</div>
</footer>
<script src="charts.js"></script>
</body>
</html>
```

FILE: styles.css
```css
* { box-sizing: border-box; }
body { margin: 0; width: 2560px; height: 1080px; overflow: hidden; background: #202020; font-family: "Open Sans", "Noto Sans", sans-serif; }
svg { flex: none; display: block; }
.defs { position: absolute; }
.screen { display: flex; height: 1032px; }

.sidebar { width: 40px; background: #08070b; color: #ee1e4e; display: flex; flex-direction: column; align-items: center; }
.sidebar svg { fill: none; stroke: #ee1e4e; stroke-width: 1.2; overflow: visible; }
.side-top { height: 77px; padding-top: 10px; }
.side-cell { height: 45px; display: flex; align-items: center; }
.side-line { height: 16px; width: 12px; flex: none; background: linear-gradient(#c21b41, #c21b41) 0 8px / 12px 1px no-repeat; }
.side-more { margin: auto 0 18px; display: flex; gap: 3px; }
.side-more i { width: 3px; height: 3px; border-radius: 50%; background: #ee1e4e; }

.browser { width: 2520px; display: flex; flex-direction: column; background: #12111a; border-left: 1px solid #c21b41; }
.tabs { height: 31px; background: #08070b; display: flex; align-items: stretch; color: #d8d8dc; }
.gx { width: 37px; padding: 8px 0 0 10px; border-bottom: 1px solid #fa1e4e; }
.tab { width: 188.8px; padding: 0 10px 0 7px; display: flex; align-items: center; border-bottom: 1px solid #fa1e4e; flex: none; }
.tab span { flex: 1; margin-left: 3px; overflow: hidden; white-space: nowrap; letter-spacing: -.36px; font-size: 12px; -webkit-mask-image: linear-gradient(90deg, #000 88%, transparent); mask-image: linear-gradient(90deg, #000 88%, transparent); }
.fav { width: 16px; height: 16px; }
.close { width: 11px; height: 11px; margin-left: 6px; color: #c0c0c4; }
.active { background: #12111a; border: 1px solid #fa1e4e; border-bottom: 0; border-radius: 5px 2px 0 0; color: #fff; padding-left: 6px; }
.active .close { color: #fff; }
.sound { width: 12px; height: 14px; margin-left: 5px; }
.plus { width: 13px; height: 13px; margin: 9px 0 0 7px; }
.winbtns { margin-left: auto; display: flex; gap: 24px; padding: 7px 12px 0 0; }
.winbtns svg { width: 16px; height: 16px; fill: none; stroke: #ee1e4e; stroke-width: 1.1; }
.last { border-image: linear-gradient(90deg, #fa1e4e 20%, #7a1230 100%) 1; border-width: 0 0 1px; border-style: solid; }

.toolbar { height: 38px; display: flex; align-items: center; padding: 0 3px 0 10px; }
.vdots { width: 2px; height: 12px; background: repeating-linear-gradient(#3d394b 0 2px, transparent 2px 5px); }
.lock { margin-left: 18px; }
.url { margin-left: 21px; color: #b9b4cf; font-size: 14px; width: 540px; white-space: nowrap; letter-spacing: -.29px; }
.url b { font-weight: 400; color: #fff; }
.tools { margin-left: auto; display: grid; grid-template-columns: repeat(6, 26.2px) 12px 28px 32px 32px 32px; justify-items: center; align-items: center; }
.tools svg { width: 16px; height: 16px; fill: none; stroke: #b9b4cf; color: #b9b4cf; stroke-width: 1.1; overflow: visible; }
.glyph-a { font: 700 13px "Open Sans", sans-serif; fill: #fff; stroke: none; }
.pm { font: 700 8px "Open Sans", sans-serif; fill: #fff; }
.az { font: 700 13px "Open Sans", sans-serif; fill: #111; }

.bookmarks { height: 32px; padding: 0 0 6px 15px; display: grid; grid-template-columns: 150px 84px 65px 132px 116px 108px 70px 72px 83px 111px 51px 74px 150px 77px 107px 94px 150px 148px 149px 146px 144px 150px 60px; align-items: center; color: #b9b4cf; font-size: 12px; }
.bookmarks div { display: flex; align-items: center; white-space: nowrap; letter-spacing: -.15px; }
.fd { width: 14px; height: 14px; margin-right: 9px; }
.fi { width: 16px; height: 16px; margin-right: 8px; }
.bookmarks .more { font-size: 18px; padding: 0 0 3px 39px; }

.viewport { height: 931px; display: flex; background: #fff; }
.page { width: 2504px; height: 931px; overflow: hidden; font-family: "Liberation Serif", serif; }
h1 { margin: 0; height: 57px; padding-top: 13.5px; text-align: center; font-size: 21.5px; line-height: 24px; color: #503d36; }
.field { height: 60px; display: flex; align-items: flex-start; padding-left: 7px; }
h2 { margin: 13px 0 0; width: 168px; font-size: 22px; line-height: 28px; letter-spacing: -.13px; color: #000; white-space: nowrap; }
.select { width: 1594px; height: 38px; border: 1px solid #ccc; border-radius: 4px; display: grid; grid-template-columns: 1fr 16px; font-size: 17.900px; line-height: 26px; color: #aaa; padding-right: 8px; }
.select span { text-align: center; padding-left: 23px; }
.select i { margin: 14px 0 0 2px; width: 0; height: 0; border: 5px solid transparent; border-top-color: #999; border-bottom: 0; }
.chart { display: block; font-family: "DejaVu Sans Condensed", "DejaVu Sans", sans-serif; font-stretch: condensed; }
#tree { margin-top: -8px; }
.row { display: flex; }
.title { font-size: 16.5px; fill: #2a3f5f; }
.cbt { font-size: 14px; fill: #2a3f5f; }
.tick, .leg { font-size: 12px; fill: #2a3f5f; }
.hover path { fill: #63a7ce; stroke: #444; }
.hover text { font: 13px "Liberation Sans", sans-serif; fill: #444; }
.scroll { width: 15px; background: #f1f1f1; display: flex; flex-direction: column; }
.thumb { order: 1; height: 601px; background: #cdcdcd; }
.up { order: 0; width: 15px; height: 15px; }
.down { order: 2; width: 15px; height: 15px; margin-top: auto; }

.taskbar { height: 48px; background: #202020; display: flex; color: #fff; }
.apps { display: flex; padding-left: 10px; }
.apps div { width: 44.04px; height: 48px; display: flex; align-items: center; justify-content: center; }
.apps svg { width: 24px; height: 24px; overflow: visible; }
.apps .run { background: radial-gradient(circle, #999, #999) 50% 41px / 6px 3px no-repeat; }
.apps .cur { width: 40px; margin: 4px 0 4px 2px; height: 40px; border-radius: 4px; background: linear-gradient(#ff99a4, #ff99a4) 50% 37px / 16px 3px no-repeat, #2d2d2d; }
.epic { font: 700 9px "Liberation Sans", sans-serif; fill: #fff; }
.epic2 { font: 700 4.5px "Liberation Sans", sans-serif; fill: #fff; }
.t60 { font: 700 7px "Liberation Sans", sans-serif; fill: #f3f; }
.tray { margin-left: auto; padding-right: 4px; display: grid; grid-template-columns: repeat(11, 24.2px) 27px 25px; align-items: center; justify-items: center; }
.tray svg { width: 16px; height: 16px; }
.clock { width: 87px; padding: 8px 19px 0 0; text-align: right; font-size: 11.8px; line-height: 16px; white-space: nowrap; letter-spacing: -.1px; }
```

FILE: charts.js
```javascript
const NS = 'http://www.w3.org/2000/svg';
function add(parent, tag, attrs, text) {
  const e = document.createElementNS(NS, tag);
  for (const k in attrs) e.setAttribute(k, attrs[k]);
  if (text) e.textContent = text;
  parent.appendChild(e);
  return e;
}

// Colour steps of the flight count, low to high.
const STEP = { a: '#67001f', b: '#7c0722', c: '#920f26', d: '#a81529', e: '#b92732', f: '#c53c3c', g: '#cf5346', h: '#da6954', i: '#e27f65', j: '#ea9274', k: '#f3a683', l: '#f7b698', m: '#f9c5ab', n: '#fcd6c1', o: '#fbe2d4', p: '#fae9e1', q: '#f8f3f0', s: '#dbe9f2', t: '#bbdaea', u: '#63a7ce', v: '#0d3f79', w: '#053061' };

// Panels of the treemap: origin x, horizontal units per pixel, then one line per state.
// Each entry is: label colour left top right bottom (vertical unit is a third of a pixel).
// "!" marks the hovered cell, "-" a cell whose label lies under the tooltip.
const PANELS = [
[110, 2.8, `
TX #acd2e5 42 85 842 735|AA v 58 150 414 465|CO t 419 150 630 504|WN s 635 150 826 504|MQ u 58 471 414 718|XE n 419 510 644 718|DL c 650 510 752 601|HP b 760 510 826 601|OO b 650 607 705 718|UA b 710 607 765 718|EV a 771 607 826 660|FL a 771 666 826 718
CA #e6eef4 845 85 1538 735|WN w 861 150 1197 492|OO t 861 498 1197 718|MQ l 1203 150 1373 382|UA j 1380 150 1521 382|HP i 1203 388 1365 572|DL g 1203 578 1365 718|AA f 1371 388 1521 517|AS c 1371 524 1443 652|B6 c 1449 524 1521 652|CO b 1371 658 1468 718|NW a 1475 658 1521 718`],
[650, 2.6576, `
IL #f4a784 29 85 477 735|MQ q 43 150 280 374|UA m 284 150 463 374|WN m 43 379 246 578|AA i 43 584 246 718|NW g 251 379 363 568|OO f 367 379 463 568|TZ e 251 575 355 718|FL b 360 575 463 628|DL a 360 634 427 674|EV a 360 680 427 718|OH a 432 634 463 718
FL #d05848 484 85 853 735|WN o 497 150 710 368|AA i 714 150 839 368|DL e 497 373 629 483|CO d 633 373 748 473|B6 c 753 373 839 473|EV e 497 489 629 602|DH c 633 480 734 567|FL c 738 480 839 567|US e 497 607 629 718|NW c 633 572 755 642|MQ b 760 572 839 642|UA c 633 648 755 718|HP a 760 648 797 718|XE a 802 648 839 718
GA #f1f5f6 858 85 1218 735|EV p 873 400 1026 718|FL k 1031 400 1202 591|AA d 1031 598 1125 718|OH b 1131 598 1202 676|UA a 1131 682 1202 718|DL! u 873 150 1202 392
- #d25b4a 1222 85 1532 735|- m 1236 150 1394 398|DL j 1398 150 1518 398|MQ f 1236 404 1339 573|OH e 1236 578 1339 718|AA d 1343 404 1441 524|US c 1445 404 1518 524|UA b 1343 528 1404 622|WN b 1343 627 1404 718|XE b 1408 528 1480 607|DH a 1484 528 1518 607|FL a 1408 612 1460 663|NW a 1464 612 1518 663|HP a 1408 668 1460 718|OO a 1464 668 1518 718`],
[1220, 3, `
VA #b31b2c 25 85 504 410|DH i 40 150 212 306|UA e 40 311 212 396|US e 216 150 312 301|AA c 216 306 312 396|DL c 316 150 400 252|OH c 405 150 489 252|CO b 316 257 400 324|MQ b 316 328 400 396|EV a 405 257 444 324|TZ a 449 257 489 324|WN a 405 328 444 396|XE a 449 328 489 396
CO #eb9375 25 417 504 735|OO n 40 483 216 718|UA k 221 483 359 718|F9 d 364 483 489 573|NW c 364 579 489 646|XE b 364 652 444 718|OH a 450 652 489 718
MI #fcdac7 510 85 888 419|NW s 525 150 762 403|DL b 768 150 871 201|OH b 768 207 871 258|DH a 768 264 815 316|EV a 823 264 871 316|FL a 768 323 833 359|WN a 768 366 833 403|HP a 841 323 871 403
PA #e6876b 510 425 888 735|US o 525 489 715 718|DL d 720 489 871 561|AA b 720 567 792 640|OH b 798 567 871 640|WN b 720 646 792 718|MQ a 798 646 871 680|OO a 798 685 871 718
KY #f6af8e 893 85 1216 408|OH p 908 150 1102 392|DL d 1107 150 1199 267|XE b 1107 273 1199 328|MQ a 1107 334 1149 392|NW a 1155 334 1199 392
NC #c1363a 893 412 1216 735|US j 908 478 1026 718|MQ e 1032 478 1199 560|DL b 1032 566 1103 639|EV b 1032 645 1103 718|UA b 1107 566 1199 624|DH a 1107 629 1167 672|OH a 1107 676 1167 718|WN a 1172 629 1199 718`],
[1700, 3, `
NV #dd715a -219 85 96 413|WN m -204 150 -50 399|HP e -48 150 81 260|AA c -48 265 81 328|NW a -48 334 -9 399|OO a -4 334 35 399|UA a 41 334 81 399
NJ #cb4b42 -219 421 96 735|CO i -204 485 6 606|XE h -204 612 6 718|AA b 11 485 81 558|FL b 11 564 81 639|OH a 11 645 81 680|TZ a 11 684 81 718
UT #c2373a 103 85 404 413|OO j 117 150 233 399|WN d 237 150 388 222|DL c 237 227 310 340|EV c 315 227 388 340|B6 a 237 346 285 399|NW a 289 346 336 399|UA a 341 346 388 399
OH #af182b 103 421 404 735|XE h 117 485 251 654|DL b 117 659 251 718|MQ b 256 485 333 588|CO a 338 485 388 588|EV b 256 593 342 654|OH b 256 659 342 718|AA a 347 593 388 654|WN a 347 659 388 718
TN #9a1127 411 85 691 422|NW e 426 150 548 264|WN e 552 150 676 264|MQ c 426 269 527 350|AA b 426 355 527 406|EV b 531 269 611 335|OH b 531 340 611 406|DL a 616 269 676 312|OO a 616 317 676 359|US a 616 364 676 406
AZ #b31b2c 411 429 691 735|WN g 426 492 574 623|HP e 426 628 574 718|NW b 579 492 676 545|OO b 579 551 676 603|UA b 579 610 676 661|AA a 579 667 624 718|DL a 629 667 676 718
MA #a91529 697 85 944 413|US f 712 150 828 292|AA e 833 150 929 292|DL b 712 298 763 399|UA b 767 298 818 399|B6 a 822 298 873 346|MQ a 878 298 929 346|HP a 822 351 873 399|NW a 878 351 929 399
MN #df735c 697 421 944 735|NW l 712 485 929 640|DL b 712 646 780 718|F9 a 786 646 855 680|UA a 859 646 929 680|HP a 786 685 855 718|XE a 859 685 929 718
MO #9d1228 951 85 1190 407|WN f 966 150 1088 281|AA d 1093 150 1175 281|MQ b 966 286 1068 336|DL a 1072 286 1120 336|OH a 1125 286 1175 336|NW b 966 341 1068 392|US a 1072 341 1120 392|XE a 1125 341 1175 392
WA #a81529 951 413 1190 735|AS f 966 477 1078 623|WN e 1082 477 1175 623|HP b 966 628 1022 718|UA b 1026 628 1083 718|DL a 1087 628 1129 688|NW a 1133 628 1175 688|OO a 1087 692 1175 718`],
[2080, 3, `
MD #c63e3d 57 85 297 335|WN i 72 150 204 318|FL b 209 150 282 214|AA a 209 219 243 285|DL a 247 219 282 285|HP a 209 289 282 318
LA #7c0722 57 340 297 552|B6 c 72 405 156 482|MQ b 72 487 156 537|WN b 160 405 218 479|XE b 223 405 282 479|OO a 160 484 198 537|FL a 202 484 240 537|OH a 244 484 282 537
CT #880b24 57 559 297 735|NW d 72 624 153 720|DL b 157 624 238 669|WN b 157 674 238 720|OH a 243 624 282 669|US a 243 674 282 720
HI #930f26 303 85 474 330|HA e 318 150 459 230|AA a 318 235 371 272|NW a 376 235 429 272|OO a 318 278 371 315|TZ a 376 278 429 315|UA a 434 235 459 315
AL #830924 303 337 474 558|WN d 318 402 411 494|XE b 415 402 459 494|EV a 318 498 361 543|OO a 366 498 410 543|US a 415 498 459 543
NM #aa162a 303 565 474 735|WN e 318 629 416 720|AA a 421 629 459 672|NW a 421 677 459 720
OK #8c0d25 481 85 660 246|WN d 495 150 579 231|AA a 584 150 611 203|DL a 617 150 645 203|MQ a 584 208 645 231
OR #7a0621 667 85 847 246|AS c 681 150 744 231|HP a 748 150 788 188|UA a 792 150 831 188|OO a 748 193 788 231|WN a 792 193 831 231
AK #7f0823 853 85 1008 246|AS c 868 150 928 231|NW b 933 150 992 203|CO a 933 208 992 231
AR #6f031f 481 253 639 409|MQ b 495 318 535 393|AA a 540 318 579 353|NW a 584 318 624 353|DL a 540 358 579 393|WN a 584 358 624 393
WI #6f031f 646 253 840 381|MQ b 661 318 711 366|XE b 717 318 768 366|OO a 773 318 797 366|WN a 801 318 825 366
ME #72031f 847 253 1008 381|XE b 862 318 911 366|DL a 916 318 938 366|NW a 942 318 965 366|US a 969 318 992 366
IN #6c021f 481 415 639 572|WN b 495 480 535 557|DH a 540 480 579 515|HP a 584 480 624 515|EV a 540 520 579 557|TZ a 584 520 624 557
SC #6c021f 481 579 639 735|OH b 495 643 535 720|DH a 540 643 579 678|US a 584 643 624 678|DL a 540 683 579 720|XE a 584 683 624 720
NE #67001f 646 388 767 557|EV a 661 451 704 486|NW a 708 451 751 486|AA a 661 490 687 543|OO a 692 490 719 543|UA a 723 490 751 543
PR #bb2934 646 565 767 735|AA e 661 629 751 720
IA #70031f 772 388 905 511|MQ b 787 451 836 497|OO a 840 451 861 497|UA a 866 451 888 497
MT #75041f 910 388 1008 511|OO b 925 451 968 497|NW a 973 451 993 497
RI #6a011f 772 517 887 623|MQ a 787 582 812 608|US a 816 582 842 608|WN a 846 582 872 608
WY #900e26 772 629 887 735|OO c 787 692 872 720
MS #67001f 892 517 1008 585
NH #67001f 892 592 1008 660
ID #67001f 892 666 947 735
ND #67001f 952 666 1008 735`]];

const cells = document.getElementById('cells');
function cell(label, color, L, T, R, B, parent, solo) {
  const over = label.endsWith('!');
  label = label.replace('!', '');
  const fill = STEP[color] || color, w = R - L, h = B - T;
  add(cells, 'rect', { x: L + .5, y: T + .5, width: w - 1, height: h - 1, fill, stroke: over ? '#444' : '#fff', 'stroke-opacity': over ? 1 : .68, 'stroke-width': over ? 2 : 1 });
  if (label === '-') return;
  const n = parseInt(fill.slice(3, 5), 16), r = parseInt(fill.slice(1, 3), 16);
  const light = n < 100 && !(r > 215);
  let s = parent ? 1 : Math.min(1, (w - 6.5) / 15, (h - 6) / 14.5);
  if (solo) s = label === 'ID' ? .85 : label === 'ND' ? .5 : 1;
  s = Math.max(s, .14);
  const t = add(cells, 'text', { x: L + (parent ? 6.5 : 3.2), y: T + (parent ? 2.7 : 3) + 11.2 * s, 'font-size': 12 * s, fill: light ? '#fff' : '#444' }, label);
  if (light) { t.setAttribute('stroke', '#fff'); t.setAttribute('stroke-width', .2 * s); }
}
for (const [x0, k, body] of PANELS)
  for (const line of body.trim().split('\n'))
    line.split('|').forEach((d, i, all) => {
      const [label, color, l, t, r, b] = d.split(' ');
      cell(label, color, Math.round(x0 + l / k), Math.round(360 + t / 3), Math.round(x0 + r / k), Math.round(360 + b / 3), i === 0, all.length === 1);
    });

// Pie: share, fill, text, centre of the text, rotation.
const PIE = [
  [16.1, '#636efa', '16.1%', 383, 822, 0, '#fff'], [.497, '#ffe8b3', '0.497%', 472.500, 805], [.497, '#ffffff', '0.497%', 474.500, 818], [.895, '#e8f8d8', '0.895%', 477, 832],
  [1.49, '#ffcbdc', '1.49%', 477, 845], [1.89, '#7de6f8', '1.89%', 481, 859], [2.39, '#ffdabf', '2.39%', 485, 875], [2.39, '#e0c5fd', '2.39%', 486, 893],
  [2.88, '#33ffc9', '2.88%', 443, 910, 9], [3.78, '#f6a598', '3.78%', 433, 929, 21], [4.37, '#c7cafd', '4.37%', 419, 950, 36], [4.47, '#fecb52', '4.47%', 401, 968, 53],
  [4.97, '#ff97ff', '4.97%', 376, 980, 71], [5.17, '#b6e880', '5.17%', 347, 986, 88], [6.36, '#ff6692', '6.36%', 312, 990, 0], [7.06, '#19d3f3', '7.06%', 276, 968, 0],
  [7.36, '#ffa15a', '7.36%', 251, 931, 0], [8.75, '#ab63fa', '8.75%', 248, 882, 0], [9.05, '#00cc96', '9.05%', 269, 834, 0], [9.64, '#ef553b', '9.64%', 315, 804, 0]];
const slices = document.getElementById('slices'), cx = 343.5, cy = 893.3, R = 121.2;
let a = 0;
const sum = PIE.reduce((s, p) => s + p[0], 0);
for (const [v, fill] of PIE) {
  const b = a + v / sum * 2 * Math.PI;
  add(slices, 'path', { fill, d: `M${cx} ${cy}L${cx + R * Math.sin(a)} ${cy - R * Math.cos(a)}A${R} ${R} 0 0 1 ${cx + R * Math.sin(b)} ${cy - R * Math.cos(b)}z` });
  a = b;
}
for (const [, , text, x, y, rot, fill] of PIE)
  add(slices, 'text', { x, y: y + 4.4, 'text-anchor': 'middle', 'font-size': 12, fill: fill || (rot === undefined ? '#2a3f5f' : '#444'), transform: `rotate(${rot || 0} ${x} ${y})` }, text);

const legend = document.getElementById('legend');
['WN #636efa', 'AA #ef553b', 'MQ #00cc96', 'DL #ab63fa', 'NW #ffa15a', 'OO #19d3f3', 'UA #ff6692', 'XE #b6e880', 'US #ff97ff', 'OH #fecb52', 'CO #c7cafd', 'EV #f6a598', 'HP #33ffc9', 'FL #e0c5fd'].forEach((d, i) => {
  const [name, fill] = d.split(' '), y = 785 + i * 17.15;
  add(legend, 'rect', { x: 570, y: y - 6, width: 11, height: 12, fill });
  add(legend, 'text', { x: 594, y: y + 4.500, class: 'leg' }, name);
});

// State outlines of the choropleth.
const STATES = [
['#e0f3db','348,238 425,264 418,300 412,343 400,337 380,338 360,332 335,330 330,318 317,304 321,275 319,246 332,256 338,262 340,288 344,288 346,272'],
['#f3faea','317,304 327,308 333,330 370,336 400,337 412,343 418,352 410,375 403,390 404,405 395,449 289,412 290,385 308,340'],
['#08407f','289,412 349,435 334,515 402,640 406,665 398,685 393,710 348,702 345,680 335,660 316,640 301,632 300,605 290,570 286,525 278,495 279,475 273,455 278,430'],
['#b7e3bd','349,435 439,460 414,622 405,620 402,640 334,515'],
['#edf8e6','427,265 439,268 436,300 443,320 452,335 447,366 454,362 458,375 465,402 476,398 492,400 484,470 395,449 404,400 418,350 412,340'],
['#f1f9e9','439,268 520,288 603,300 597,407 495,390 490,403 476,398 465,402 457,370 447,366 452,335 436,300'],
['#f1f9e9','495,390 597,407 590,516 482,500'],
['#def2d9','439,460 484,470 482,500 513,507 502,613 421,598'],
['#cfecc9','513,507 622,520 617,629 502,613'],
['#cfecc9','421,598 502,613 485,767 448,760 388,712 398,690 406,665 404,620 414,622'],
['#eef8e8','502,613 600,628 592,764 530,757 528,762 499,760 498,770 485,767'],
['#f5fbef','603,300 700,306 704,340 708,385 599,382'],
['#f5fbec','599,382 708,388 709,455 704,478 685,470 594,462'],
['#f1f9e9','594,462 685,470 704,478 712,500 720,540 726,550 622,546 622,520 590,516'],
['#f5fbef','622,546 726,550 732,560 737,575 738,633 617,629'],
['#e7f5e1','600,628 738,633 743,680 743,722 730,716 700,720 680,712 660,706 649,700 648,644 599,641'],
['#08589a','599,641 648,644 649,700 660,706 680,712 700,720 730,716 751,727 752,765 760,795 756,825 755,832 738,848 728,860 700,882 691,900 691,937 672,930 658,920 652,890 640,870 625,832 610,827 597,829 585,845 565,830 555,800 540,778 530,762 530,757 592,764'],
['#cdebc6','700,306 727,304 730,294 737,314 760,318 780,325 803,326 785,345 775,362 763,390 763,410 775,425 787,440 787,455 709,455 708,385'],
['#f5fbef','709,455 787,455 792,472 805,490 800,506 790,518 785,532 718,535 715,505'],
['#d9f0d3','718,535 785,532 792,560 803,572 805,590 820,605 828,625 822,640 820,655 810,655 812,645 741,645 738,575'],
['#e7f5e1','741,645 812,645 810,655 820,658 805,700 798,740 750,740 751,727 743,722'],
['#e2f3dc','750,740 798,740 800,765 794,793 829,793 838,842 820,838 800,843 785,830 756,832 760,795'],
['#eaf7e4','763,390 765,372 780,362 800,372 828,378 836,395 843,400 838,475 800,478 787,440 775,425 763,410'],
['#4eb3d3','800,478 845,478 848,520 852,580 843,622 828,625 820,605 805,590 803,572 790,550 790,525 805,500'],
['#cdebc6','803,372 815,358 826,343 830,360 845,365 862,355 875,362 890,372 860,378 845,388 840,405 835,382'],
['#cdebc6','860,490 865,450 860,420 864,400 877,385 903,392 908,415 896,435 910,428 918,440 920,465 910,488'],
['#eaf7e4','848,497 888,490 893,565 882,580 870,595 848,602 852,570'],
['#d7efd1','888,490 910,488 925,492 955,470 958,515 945,555 935,572 893,565'],
['#b2e0ba','828,640 835,620 850,602 870,597 885,580 893,567 910,575 930,570 944,600 930,618 920,626'],
['#def2d9','816,683 830,640 955,622 935,642 915,672'],
['#f5fbef','815,683 850,683 852,808 835,812 829,793 794,793 800,760 798,735'],
['#f1f9e9','850,683 893,677 907,735 910,785 866,790 870,805 852,808'],
['#65c2ca','893,677 932,672 950,695 980,740 975,780 968,790 913,790 907,760 907,735'],
['#3fa2cc','866,790 913,787 968,790 973,780 985,810 1000,845 1016,880 1015,920 1005,928 997,922 985,900 968,880 960,860 962,835 948,820 930,805 912,820 895,805 868,804'],
['#f5fbef','932,672 940,662 970,658 980,665 1000,664 1014,682 1000,715 980,740 960,705'],
['#b2e0ba','915,672 935,642 955,622 1048,600 1054,630 1040,645 1030,665 1014,682 1000,664 980,665 970,658 940,662 932,672'],
['#b7e3bd','920,626 944,603 965,600 980,565 990,558 1003,535 1020,550 1026,570 1040,580 1048,600 955,622'],
['#e4ebf5','935,572 945,555 958,530 962,535 980,533 1000,530 990,558 980,565 965,600 950,603 940,590'],
['#cfecc9','955,475 962,468 1035,452 1048,472 1040,488 1047,505 1038,513 962,530'],
['#bbe5c0','965,465 975,430 1008,420 1012,400 1025,368 1048,363 1056,420 1060,470 1084,460 1087,465 1062,480 1048,472 1035,452'],
['#cfecc9','1042,468 1060,475 1062,500 1056,530 1042,518 1047,505 1040,488'],
['#e7f5e1','965,532 1038,515 1042,545 1052,545 1043,582 1040,560 1030,545 1022,550 1003,530'],
['#e4ebf5','1038,515 1044,515 1053,545 1042,545'],
['#f1f9e9','1048,363 1073,355 1070,420 1058,420'],
['#f3faea','1073,355 1078,345 1087,380 1095,400 1092,412 1068,420'],
['#f1f9e9','1078,345 1088,315 1090,280 1100,282 1108,276 1117,285 1122,310 1130,318 1138,332 1118,358 1107,360 1097,385 1095,400'],
['#d9f0d3','1060,422 1097,412 1102,425 1113,425 1113,435 1105,438 1098,432 1060,440'],
['#e7f5e1','1060,440 1085,434 1087,450 1064,466'],
['#eef8e8','1085,434 1093,432 1096,446 1087,450'],
['#f1f9e9','340,778 355,784 380,787 392,875 410,880 425,885 443,905 443,912 420,893 395,878 370,880 360,872 350,885 345,900 330,915 300,935 320,915 335,900 325,895 308,885 302,865 305,850 325,850 322,832 305,825 318,818 310,798 330,785'],
['#f1f9e9','288,838 298,846 293,850'],['#f1f9e9','466,853 474,855 473,863 466,860'],['#f1f9e9','495,870 507,874 502,880'],['#f1f9e9','513,880 524,884 518,886'],['#f1f9e9','527,885 539,894 534,899 527,890'],['#e7f5e1','542,908 556,913 564,927 545,943 539,924'],['#f1f9e9','344,905 353,903 348,915']];
const map = document.getElementById('states');
for (const [fill, points] of STATES)
  add(map, 'polygon', { points, fill, stroke: '#444', 'stroke-width': 1, 'vector-effect': 'non-scaling-stroke', 'stroke-linejoin': 'round' });
add(map, 'ellipse', { cx: 999, cy: 878, rx: 3, ry: 4, fill: '#fff' });
add(map, 'polygon', { points: '456,478 466,488 463,498', fill: '#fff' });
```
